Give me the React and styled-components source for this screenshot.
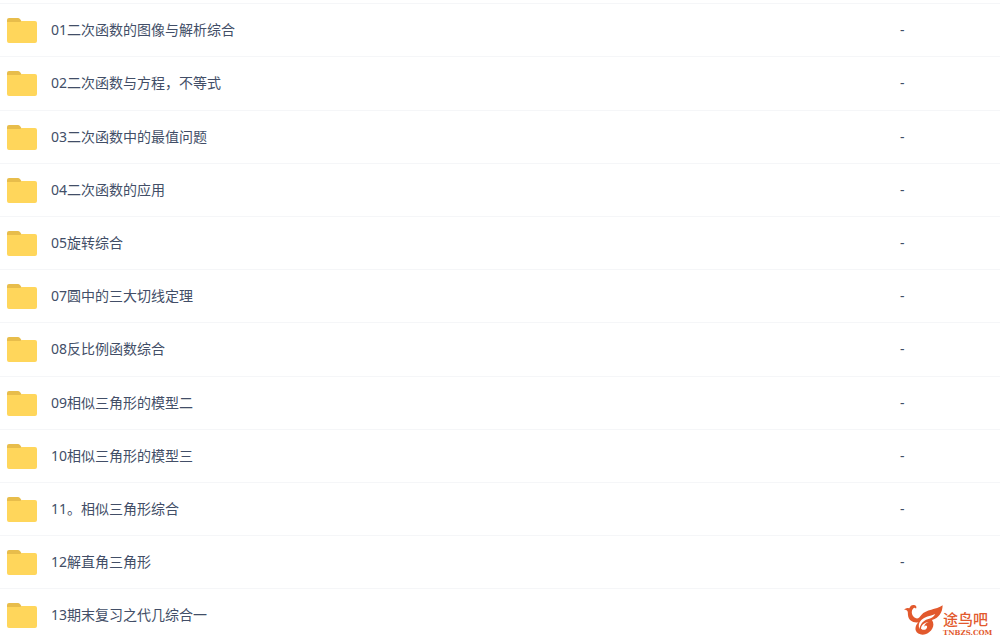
import React from "react";
import styled, { createGlobalStyle } from "styled-components";

const GlobalStyle = createGlobalStyle`
  * { box-sizing: border-box; }
  body {
    margin: 0;
    background: #fff;
    color: #424e67;
    font-family: "Noto Sans", "Noto Sans CJK SC", sans-serif;
    font-size: 14px;
    line-height: 24px;
  }
`;

const Page = styled.main`
  position: relative;
  min-height: 100vh;
  padding-top: 3px;
`;

const FileTable = styled.table`
  width: 100%;
  border-collapse: separate;
  border-spacing: 0;
  table-layout: fixed;
`;

const FileRow = styled.tr`
  height: 53px;

  &:nth-child(5n + 2) { height: 54px; }
  &:last-child { height: 52px; }
`;

const Cell = styled.td`
  padding: 14px 0 0;
  border-top: 1px solid #f5f6f8;
  vertical-align: top;
`;

const NameCell = styled(Cell)`
  width: 90%;
  padding-left: 7px;
`;

const FileLink = styled.a`
  display: flex;
  align-items: flex-start;
  gap: 14px;
  color: inherit;
  text-decoration: none;
`;

const FolderSvg = styled.svg`
  flex: none;
  width: 30px;
  height: 26px;
`;

const Brand = styled.a`
  position: absolute;
  right: 8px;
  bottom: 4px;
  display: flex;
  align-items: flex-end;
  color: #e2592d;
  text-decoration: none;
`;

const BirdSvg = styled.svg`
  width: 39px;
  height: 32px;
`;

const BrandText = styled.span`
  display: flex;
  flex-direction: column;
  gap: 2px;
  width: 49px;
`;

const BrandName = styled.span`
  font-size: 15px;
  font-weight: 500;
  line-height: 16px;
`;

const BrandDomain = styled.span`
  font-family: "DejaVu Serif", serif;
  font-size: 7px;
  font-weight: 700;
  line-height: 7px;
`;

const folders = [
  { name: "01二次函数的图像与解析综合", size: "-" },
  { name: "02二次函数与方程，不等式", size: "-" },
  { name: "03二次函数中的最值问题", size: "-" },
  { name: "04二次函数的应用", size: "-" },
  { name: "05旋转综合", size: "-" },
  { name: "07圆中的三大切线定理", size: "-" },
  { name: "08反比例函数综合", size: "-" },
  { name: "09相似三角形的模型二", size: "-" },
  { name: "10相似三角形的模型三", size: "-" },
  { name: "11。相似三角形综合", size: "-" },
  { name: "12解直角三角形", size: "-" },
  { name: "13期末复习之代几综合一", size: "" },
];

function Folder() {
  return (
    <FolderSvg viewBox="0 0 30 26" aria-hidden="true">
      <path d="M0 8V2Q0 0 2 0H11Q12 0 13 1L15 4V8Z" fill="#e8bd4b" />
      <path d="M0 4H13L15 3H28Q30 3 30 5V23Q30 25 28 25H2Q0 25 0 23Z" fill="#ffd65b" />
    </FolderSvg>
  );
}

function Bird() {
  return (
    <BirdSvg viewBox="0 0 117 96" aria-hidden="true" fill="currentColor">
      <path d="M0 17Q7 10 16 13Q20 1 31 3Q40 5 36 14Q32 9 27 14C20 22 23 38 36 43C43 45 47 39 52 33C66 16 96 18 116 4C115 25 107 41 84 48C92 60 88 74 76 84C62 97 40 94 35 79C33 71 36 62 43 55C28 58 13 49 12 34C11 25 14 17 0 17ZM94 30C77 37 62 38 52 48C44 56 43 66 46 75C49 61 57 50 71 46C81 43 89 39 94 30ZM74 54C60 55 51 64 51 74C60 82 71 75 69 67Q66 62 61 68C61 60 66 57 74 54Z" fillRule="evenodd" />
    </BirdSvg>
  );
}

export default function App() {
  return (
    <>
      <GlobalStyle />
      <Page>
        <FileTable>
          <tbody>
            {folders.map(({ name, size }) => (
              <FileRow key={name}>
                <NameCell>
                  <FileLink href="#">
                    <Folder />
                    <span>{name}</span>
                  </FileLink>
                </NameCell>
                <Cell>{size}</Cell>
              </FileRow>
            ))}
          </tbody>
        </FileTable>
        <Brand href="#">
          <Bird />
          <BrandText>
            <BrandName>途鸟吧</BrandName>
            <BrandDomain>TNBZS.COM</BrandDomain>
          </BrandText>
        </Brand>
      </Page>
    </>
  );
}
